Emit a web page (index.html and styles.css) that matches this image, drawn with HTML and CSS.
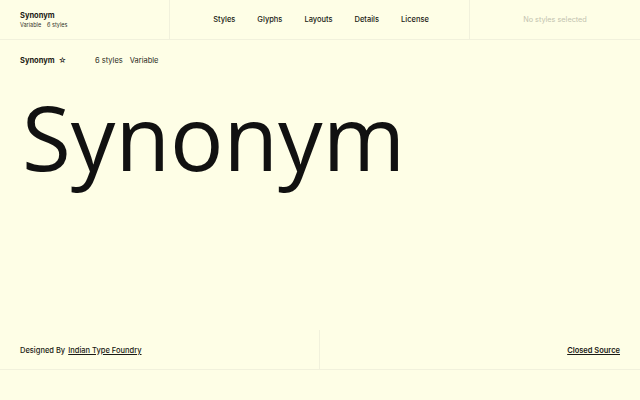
FILE: index.html
```html
<!DOCTYPE html>
<html>

<head lang="en">
  <meta charset="UTF-8">
  <title>Synonym</title>
  <link rel="stylesheet" href="styles.css">
</head>

<body>
  <div class="header">
    <div class="brand">
      <div class="brand-name">Synonym</div>
      <div class="brand-meta"><span>Variable</span><span>6 styles</span></div>
    </div>
    <ul class="nav">
      <li><a href="#">Styles</a></li>
      <li><a href="#">Glyphs</a></li>
      <li><a href="#">Layouts</a></li>
      <li><a href="#">Details</a></li>
      <li><a href="#">License</a></li>
    </ul>
    <div class="selected">No styles selected</div>
  </div>

  <div class="toolbar">
    <div class="family">Synonym <span class="star">&#9734;</span></div>
    <div class="info"><span>6 styles</span><span>Variable</span></div>
  </div>

  <div class="specimen">Synonym</div>

  <div class="footer">
    <div class="credit"><span>Designed By</span><a href="#">Indian Type Foundry</a></div>
    <div class="source"><a href="#">Closed Source</a></div>
  </div>
</body>

</html>
```

FILE: styles.css
```css
/* reset */
body,
ul,
li {
  margin: 0;
  padding: 0;
}

ul {
  list-style: none;
}

body {
  width: 640px;
  height: 400px;
  background: #fefee6;
  font-family: Inter, "Liberation Sans", sans-serif;
  color: #1a1a14;
  overflow: hidden;
}

a {
  color: inherit;
  text-decoration: none;
}

.header {
  display: grid;
  grid-template-columns: 170px 300px 170px;
  height: 40px;
  border-bottom: 1px solid #f1f1dc;
  box-sizing: border-box;
}

.brand {
  padding: 11px 0 0 20px;
  border-right: 1px solid #f1f1dc;
}

.brand-name {
  font-size: 7.5px;
  font-weight: 700;
  line-height: 10px;
}

.brand-meta {
  font-size: 5.5px;
  line-height: 8px;
  color: #33332a;
}

.brand-meta span + span {
  margin-left: 6px;
}

.nav {
  display: flex;
  justify-content: center;
  align-items: center;
  gap: 22px;
  padding-left: 3px;
  font-size: 7.5px;
  font-weight: 500;
  border-right: 1px solid #f1f1dc;
}

.selected {
  display: flex;
  justify-content: center;
  align-items: center;
  font-size: 7.3px;
  color: #c3c3b0;
}

.toolbar {
  display: flex;
  align-items: center;
  height: 40px;
  padding: 0 20px;
  font-size: 7.5px;
}

.family {
  width: 75px;
  font-weight: 700;
}

.star {
  font-weight: 400;
  margin-left: 2px;
  font-size: 7.5px;
}

.info span + span {
  margin-left: 7px;
}

.info {
  color: #2a2a22;
}

.specimen {
  height: 250px;
  padding: 12px 0 0 22px;
  box-sizing: border-box;
  font-family: "Open Sans", sans-serif;
  font-weight: 400;
  font-size: 89px;
  line-height: 1;
  color: #111;
}

.footer {
  display: grid;
  grid-template-columns: 320px 320px;
  height: 40px;
  border-bottom: 1px solid #f1f1dc;
  box-sizing: border-box;
  font-size: 7.5px;
  font-weight: 500;
}

.credit {
  display: flex;
  align-items: center;
  gap: 3px;
  padding: 1px 0 0 20px;
  border-right: 1px solid #f1f1dc;
}

.credit a,
.source a {
  text-decoration: underline;
}

.source {
  display: flex;
  align-items: center;
  justify-content: flex-end;
  padding: 1px 20px 0 0;
  font-weight: 600;
}
```
